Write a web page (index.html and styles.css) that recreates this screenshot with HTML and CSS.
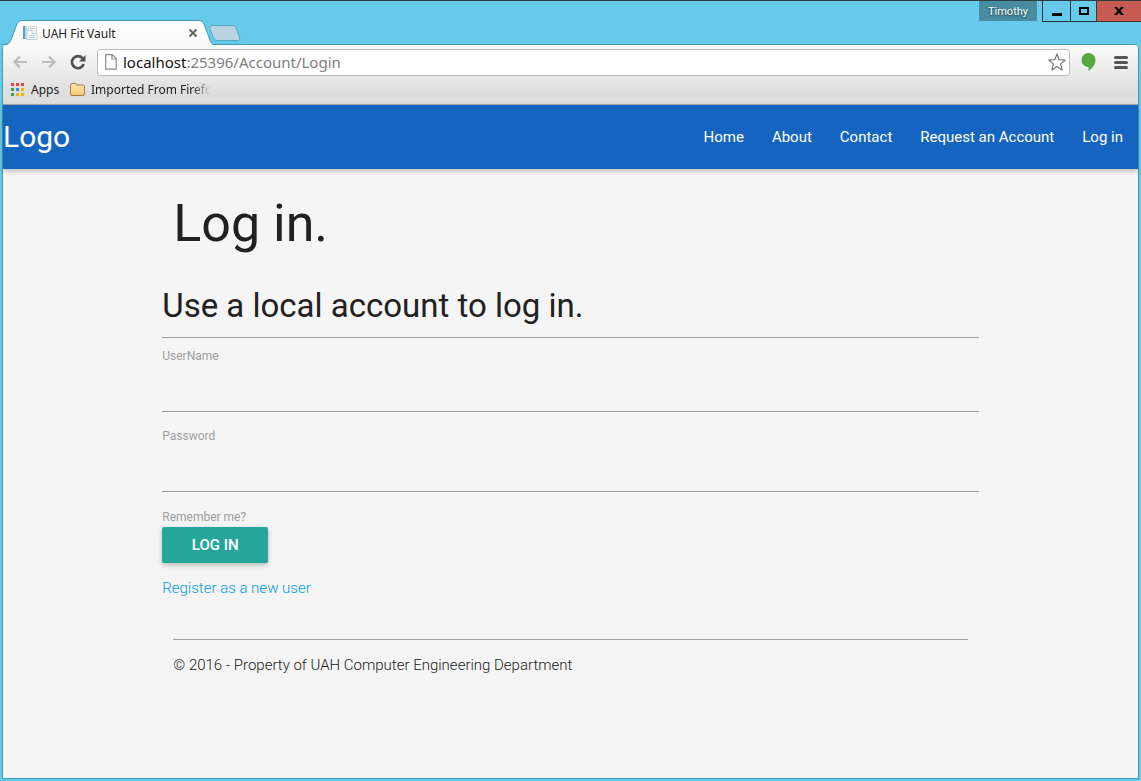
FILE: index.html
```html
<!DOCTYPE html>
<html lang="en">
<head>
<meta charset="utf-8">
<title>UAH Fit Vault</title>
<link rel="stylesheet" href="styles.css">
</head>
<body>
<div class="window">
  <div class="titlebar">
    <div class="tab">
      <svg class="tab-shape" width="212" height="26" viewBox="0 0 212 26"><defs><linearGradient id="tabfill" x1="0" y1="0" x2="0" y2="1"><stop offset="0" stop-color="#fff"/><stop offset="1" stop-color="#fafafa"/></linearGradient></defs><path d="M0 26C6 25 7 24 9 20L15 4Q16.500 .5 20 .5H197Q200.500 .5 202 4L208 20Q210 25 212 26Z" fill="url(#tabfill)"/><path d="M0 24.500C5 24.500 7 24 9 20L15 4Q16.500 .5 20 .5H197Q200.500 .5 202 4L208 20Q209 23 211 24.500" fill="none" stroke="#429bb6"/></svg>
      <svg class="favicon" width="16" height="16" viewBox="0 0 16 16"><path d="M1 1h2.500v13H1z" fill="#5b9fd2"/><path d="M3.500 2h2v12h-2z" fill="#c8dceb"/><path d="M6.500 1.500h8v9h-8z" fill="#f1f3f5" stroke="#d2dbe1"/><path d="M5 5.500h5v3h5v6H5z" fill="#f6f7f8" stroke="#c5d0d9"/><path d="M7 10.500h6M7 12.500h6M8 3.500h5" stroke="#c3cbd2"/></svg>
      <span class="tab-title">UAH Fit Vault</span>
      <button class="tab-close" aria-label="Close tab"><svg width="10" height="10" viewBox="0 0 10 10"><path d="M1.500 1.500l7 7M8.500 1.500l-7 7" stroke="#606060" stroke-width="1.800"/></svg></button>
    </div>
    <button class="new-tab" aria-label="New tab"><svg width="32" height="16" viewBox="0 0 32 16"><path d="M3 .5H24Q26 .5 27 3L30.500 12Q31.500 15.500 29 15.500H8Q5.500 15.500 4.500 13L.8 3.500Q0 .5 3 .5Z" fill="#b9d4e0" stroke="#5ba9c3"/></svg></button>
    <div class="window-controls">
      <button class="profile">Timothy</button>
      <button class="control" aria-label="Minimize"><svg width="10" height="9" viewBox="0 0 10 9"><path d="M0 6h10v3H0z"/></svg></button>
      <button class="control maximize" aria-label="Maximize"><svg width="10" height="9" viewBox="0 0 10 9"><path d="M0 0h10v8H0zM2 2v4h6V2z" fill-rule="evenodd"/></svg></button>
      <button class="control close" aria-label="Close"><svg width="10" height="9" viewBox="0 0 10 9"><path d="M0 0h3l2 2.500L7 0h3L6.500 4 10 8H7L5 5.700 3 8H0l3.500-4z"/></svg></button>
    </div>
  </div>
  <div class="frame">
    <div class="chrome">
      <div class="toolbar">
        <button class="nav-button" aria-label="Back"><svg width="16" height="14" viewBox="0 0 16 14"><path d="M15 7H2.500M8 1.500L2.500 7 8 12.500" fill="none" stroke="#bdbdbd" stroke-width="2.200"/></svg></button>
        <button class="nav-button" aria-label="Forward"><svg width="16" height="14" viewBox="0 0 16 14"><path d="M1 7h12.500M8 1.500L13.500 7 8 12.500" fill="none" stroke="#bdbdbd" stroke-width="2.200"/></svg></button>
        <button class="nav-button reload" aria-label="Reload"><svg width="16" height="16" viewBox="0 0 16 16"><path d="M12.500 4.200A6 6 0 1 0 13.700 10" fill="none" stroke="#505050" stroke-width="2.600"/><path d="M15.500 1v6.500H9z" fill="#505050"/></svg></button>
        <div class="omnibox">
          <svg width="12" height="16" viewBox="0 0 12 16"><path d="M.7 .7h6.500l4 4v10.500H.7zM7 1v4h4" fill="#fff" stroke="#8b8b8b" stroke-width="1.200"/></svg>
          <div class="url">localhost<span class="url-path">:25396/Account/Login</span></div>
          <button class="star" aria-label="Bookmark this page"><svg width="18" height="18" viewBox="0 0 18 18"><path d="M9 1l2.200 5.700 6.100.3-4.700 3.900 1.500 6L9 13.600 3.900 16.900l1.500-6L.7 7l6.100-.3z" fill="#fff" stroke="#777" stroke-width="1.200" stroke-linejoin="round"/></svg></button>
        </div>
        <button class="extension" aria-label="Extension"><svg width="15" height="18" viewBox="0 0 15 18"><path d="M7.500 0a7 7 0 0 1 7 7c0 4.500-3 8-7 11v-4A7 7 0 0 1 7.500 0Z" fill="#55a93f"/></svg></button>
        <button class="menu" aria-label="Menu"><svg width="14" height="13" viewBox="0 0 14 13"><path d="M1.500 1.500h11M1.500 6.500h11M1.500 11.500h11" stroke="#555" stroke-width="3" stroke-linecap="round"/></svg></button>
      </div>
      <div class="bookmarks">
        <a class="bookmark apps" href="#"><svg width="13" height="13" viewBox="0 0 13 13"><path d="M0 0h3v3H0zM5 0h3v3H5zM10 0h3v3h-3z" fill="#ea4335"/><path d="M0 5h3v3H0z" fill="#34a853"/><path d="M5 5h3v3H5z" fill="#3b86ee"/><path d="M10 5h3v3h-3zM5 10h3v3H5zM10 10h3v3h-3z" fill="#f4b400"/><path d="M0 10h3v3H0z" fill="#34a853"/></svg>Apps</a>
        <a class="bookmark folder" href="#"><svg width="15" height="13" viewBox="0 0 15 13"><defs><linearGradient id="folder" x1="0" y1="0" x2="0" y2="1"><stop offset="0" stop-color="#ffe9ae"/><stop offset="1" stop-color="#f6c873"/></linearGradient></defs><path d="M.5 2Q.5 .5 2 .5H5Q6 .5 6.500 2H13Q14.500 2 14.500 3.500V11Q14.500 12.500 13 12.500H2Q.5 12.500 .5 11Z" fill="url(#folder)" stroke="#a97b45"/></svg><span class="bookmark-label">Imported From Firefox</span></a>
      </div>
    </div>
    <div class="page">
      <nav class="navbar">
        <a class="brand" href="#">Logo</a>
        <div class="nav-links"><a href="#">Home</a><a href="#">About</a><a href="#">Contact</a><a href="#">Request an Account</a><a href="#">Log in</a></div>
      </nav>
      <main class="container">
        <h1>Log in.</h1>
        <form class="login">
          <h2>Use a local account to log in.</h2>
          <hr>
          <div class="field first"><label for="user">UserName</label><input id="user" type="text"></div>
          <div class="field"><label for="password">Password</label><input id="password" type="password"></div>
          <label class="remember"><input type="checkbox">Remember me?</label>
          <button class="submit" type="button">LOG IN</button>
          <a class="register" href="#">Register as a new user</a>
        </form>
        <footer><hr><p>© 2016 - Property of UAH Computer Engineering Department</p></footer>
      </main>
    </div>
  </div>
</div>
</body>
</html>
```
FILE: styles.css
```css
* { box-sizing: border-box; }
body { margin: 0; font-family: Roboto, sans-serif; color: #212121; }
button { border: 0; padding: 0; background: none; font-family: inherit; }
a { text-decoration: none; }
svg { display: block; flex: none; }

.window { display: flex; flex-direction: column; min-height: 100vh; background: #66cbea; border-top: 1px solid #303a3e; padding: 0 2px 2px; font-size: 12px; }
.titlebar { display: flex; height: 43px; padding-left: 1px; }
.tab { position: relative; display: flex; align-items: center; width: 206px; height: 26px; margin-top: 19px; padding: 0 11px 0 19px; z-index: 1; font-family: "Noto Sans", sans-serif; color: #222; }
.tab-shape { position: absolute; left: -1px; top: 0; }
.favicon, .tab-title, .tab-close { position: relative; }
.tab-title { flex: 1; margin-left: 4px; }
.new-tab { align-self: flex-end; margin: 0 0 3px; }
.window-controls { display: flex; align-items: flex-start; margin: 0 -2px 0 auto; }
.profile { width: 58px; height: 20px; margin-right: 5px; background: #488ca1; color: #fff; font-size: 11px; text-shadow: 0 1px 2px #173640; }
.control { display: flex; align-items: center; justify-content: center; width: 28px; height: 21px; border: solid #26363c; border-width: 0 0 1px 1px; }
.maximize { width: 26px; }
.close { width: 45px; background: #c75a51; border-color: #4b3330; }

.frame { flex: 1; display: flex; flex-direction: column; border: 1px solid #4399b2; border-radius: 4px 4px 0 0; background: #f5f5f5; }
.chrome { background: linear-gradient(#fbfbfb, #dedede 80%); border-bottom: 1px solid #a6a6a6; border-radius: 4px 4px 0 0; font-family: "Noto Sans", sans-serif; }
.toolbar { display: flex; align-items: center; height: 34px; padding: 0 10px 0 8px; }
.nav-button { width: 29px; }
.nav-button svg { margin-left: 1px; }
.reload { width: 20px; }
.omnibox { flex: 1; display: flex; align-items: center; height: 27px; margin-left: 8px; padding: 0 3px 0 7px; background: #fff; border: 1px solid #bdbdbd; border-radius: 3px; }
.url { flex: 1; margin-left: 6px; font-size: 15px; color: #111; }
.url-path { color: #808080; }
.extension { margin-left: 11px; }
.menu { margin-left: 18px; }
.bookmarks { display: flex; align-items: center; height: 25px; padding: 0 8px 4px; }
.bookmark { display: flex; align-items: center; color: #222; }
.apps { gap: 7px; width: 59px; }
.folder { gap: 6px; }
.bookmark-label { white-space: nowrap; -webkit-mask-image: linear-gradient(90deg, #000 80%, transparent 94%); mask-image: linear-gradient(90deg, #000 80%, transparent 94%); }

.page { flex: 1; font-size: 15px; line-height: 22px; }
.navbar { display: flex; align-items: center; justify-content: space-between; height: 64px; background: #1565c0; box-shadow: 0 2px 5px rgba(0,0,0,.24); }
.navbar a { color: #fff; }
.brand { font-size: 30px; }
.nav-links { display: flex; gap: 28px; padding-right: 15px; }
.container { width: 70%; margin: 0 auto; }
h1, h2 { font-weight: 400; margin: 0; }
h1 { padding: 26px 0 33px; font-size: 52px; line-height: 58px; }
h2 { font-size: 33px; line-height: 40px; margin-bottom: 11px; }
hr { margin: 0; border: 0; border-top: 1px solid #9e9e9e; }
.login { margin: 0 -11px; }
.login hr { margin-bottom: 8px; }
.login label { color: #9e9e9e; font-size: 12px; line-height: 20px; }
.field { display: flex; flex-direction: column; height: 80px; padding-top: 14px; }
.field.first { height: 66px; padding-top: 0; }
.field input { flex: 1; width: 100%; border: 0; border-bottom: 1px solid #9e9e9e; background: none; outline: 0; }
.remember { display: block; padding-top: 15px; }
.remember input { position: absolute; opacity: 0; pointer-events: none; }
.submit { display: block; width: 106px; height: 36px; background: #26a69a; color: #fff; border-radius: 2px; box-shadow: 0 2px 5px rgba(0,0,0,.26); font-size: 15px; font-weight: 500; }
.register { display: inline-block; margin-top: 14px; color: #039be5; font-weight: 300; }
footer { margin-top: 40px; font-weight: 300; }
footer p { margin: 14px 0 0; }
```
